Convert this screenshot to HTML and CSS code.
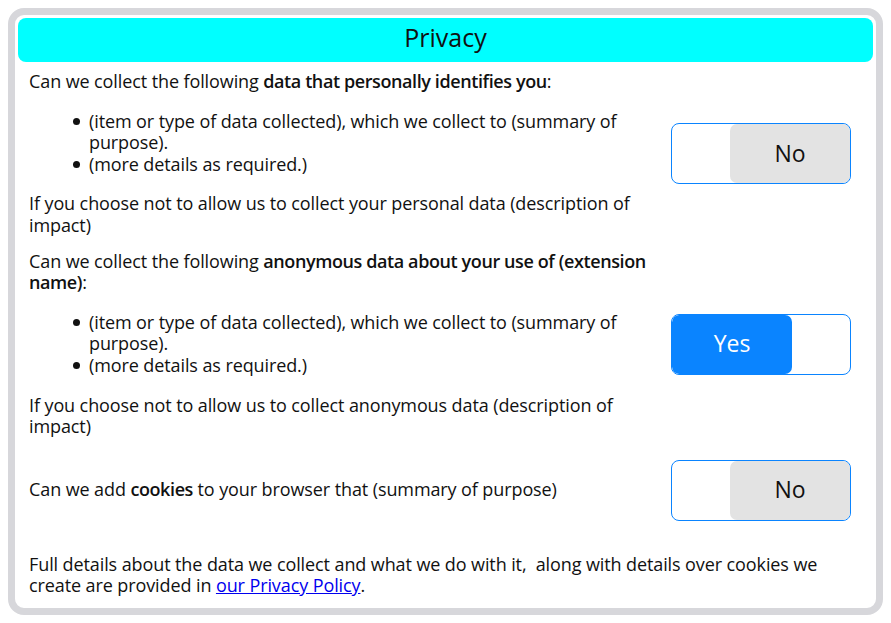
FILE: index.html
```html
<!DOCTYPE html>
<html lang="en">
<head>
<meta charset="utf-8">
<title>Privacy</title>
<link rel="stylesheet" href="styles.css">
</head>
<body>
<div class="card">
  <div class="header">Privacy</div>
  <div class="content">
    <div class="section section-first">
      <div class="text">
        <p>Can we collect the following <b>data that personally identifies you</b>:</p>
        <ul>
          <li>(item or type of data collected), which we collect to (summary of purpose).</li>
          <li>(more details as required.)</li>
        </ul>
        <p>If you choose not to allow us to collect your personal data (description of impact)</p>
      </div>
      <div class="toggle">
        <span class="spacer"></span>
        <span class="knob knob-off">No</span>
      </div>
    </div>
    <div class="section section-second">
      <div class="text">
        <p>Can we collect the following <b>anonymous data about your use of (extension name)</b>:</p>
        <ul>
          <li>(item or type of data collected), which we collect to (summary of purpose).</li>
          <li>(more details as required.)</li>
        </ul>
        <p>If you choose not to allow us to collect anonymous data (description of impact)</p>
      </div>
      <div class="toggle">
        <span class="knob knob-on">Yes</span>
        <span class="spacer"></span>
      </div>
    </div>
    <div class="section section-third">
      <div class="text">
        <p>Can we add <b>cookies</b> to your browser that (summary of purpose)</p>
      </div>
      <div class="toggle">
        <span class="spacer"></span>
        <span class="knob knob-off">No</span>
      </div>
    </div>
    <p class="footer">Full details about the data we collect and what we do with it,&nbsp; along with details over cookies we create are provided in <a href="#">our Privacy Policy</a>.</p>
  </div>
</div>
</body>
</html>
```
FILE: styles.css
```css
html, body {
  margin: 0;
  padding: 0;
}
body {
  margin: 8px;
  font-family: "Open Sans", "Noto Sans", sans-serif;
  font-size: 18px;
  line-height: 1.2;
  color: #111;
  background: #fff;
  letter-spacing: -0.1px;
}
.card {
  box-sizing: border-box;
  height: 607px;
  border: 7px solid #d7d7db;
  border-radius: 16px;
  padding: 3px;
  overflow: hidden;
}
.header {
  height: 44px;
  box-sizing: border-box;
  padding-bottom: 6px;
  line-height: 38px;
  background: #00ffff;
  border-radius: 8px;
  text-align: center;
  font-size: 25px;
  letter-spacing: 0;
}
.content {
  padding: 9px 22px 0 11px;
}
.section {
  display: flex;
  align-items: center;
}
.section-second {
  margin-top: 14px;
}
.section-third {
  margin-top: 22px;
}
.text {
  flex: 1;
  min-width: 0;
}
.text p {
  margin: 0;
}
.text ul {
  margin: 18px 0;
  padding-left: 60px;
  list-style: none;
}
.text li::before {
  content: "";
  display: inline-block;
  width: 7px;
  height: 7px;
  border-radius: 50%;
  background: #111;
  margin-left: -16px;
  margin-right: 9px;
  vertical-align: 3px;
}
b {
  font-weight: 600;
  letter-spacing: -0.4px;
}
.toggle {
  flex: none;
  width: 180px;
  height: 61px;
  box-sizing: border-box;
  border: 1px solid #0a84ff;
  border-radius: 8px;
  display: flex;
  overflow: hidden;
  background: #fff;
}
.spacer {
  flex: 1;
}
.knob {
  width: 120px;
  display: flex;
  align-items: center;
  justify-content: center;
  font-size: 23px;
  letter-spacing: 0;
  border-radius: 7px;
}
.knob-off {
  background: #e3e3e3;
  color: #111;
}
.knob-on {
  background: #0a84ff;
  color: #fff;
}
.footer {
  margin: 33px 0 0;
}
.footer a {
  color: #0000ee;
}
```
